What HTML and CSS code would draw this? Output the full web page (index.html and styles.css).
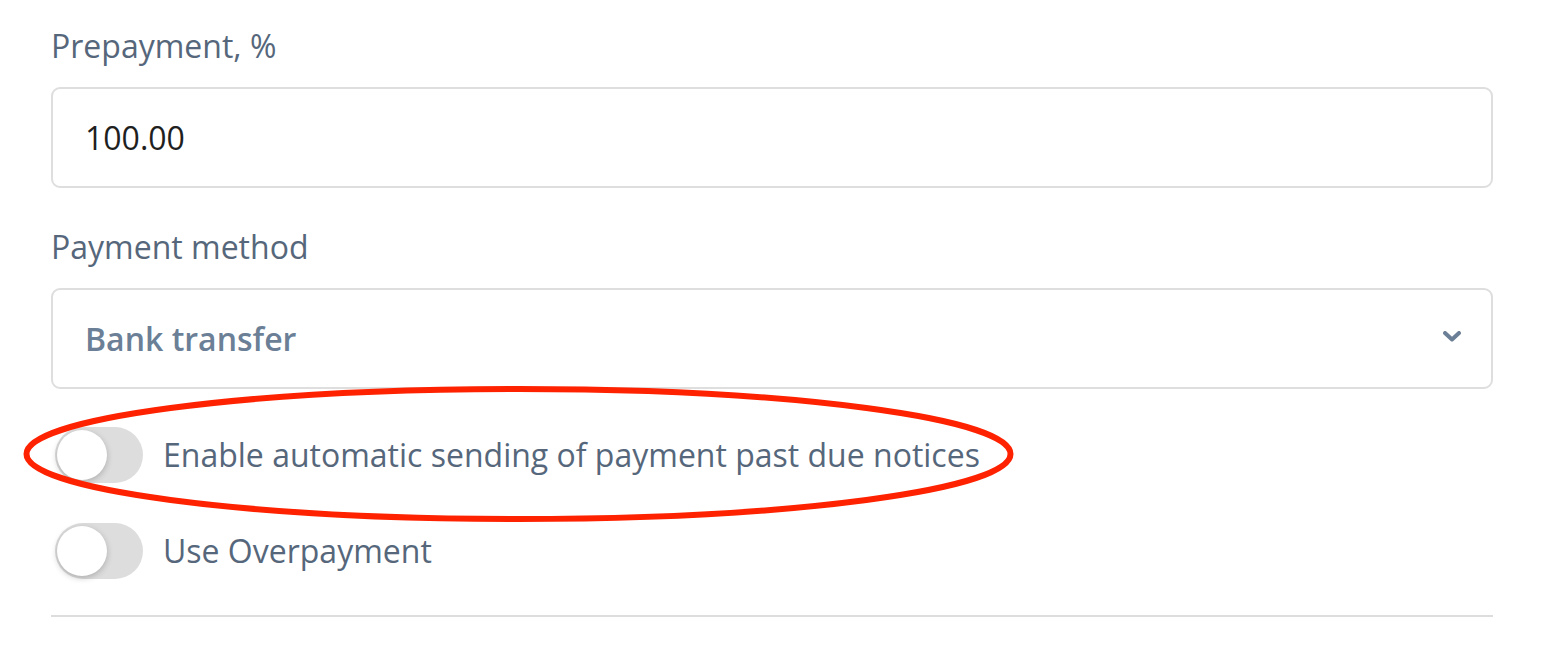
FILE: index.html
```html
<!DOCTYPE html>
<html>
<head>
<meta charset="utf-8">
<link rel="stylesheet" href="styles.css">
</head>
<body>
<div class="form">
  <div class="field">
    <label class="label">Prepayment, %</label>
    <div class="input">100.00</div>
  </div>
  <div class="field">
    <label class="label">Payment method</label>
    <div class="select">
      <span class="select-value">Bank transfer</span>
      <svg class="chevron" width="18" height="11" viewBox="0 0 18 11"><path d="M2 2 L9 8.5 L16 2" fill="none" stroke="#6b7f96" stroke-width="4" stroke-linecap="round" stroke-linejoin="round"/></svg>
    </div>
  </div>
  <div class="toggle-row first">
    <span class="toggle"><span class="knob"></span></span>
    <span class="toggle-text">Enable automatic sending of payment past due notices</span>
  </div>
  <div class="toggle-row">
    <span class="toggle"><span class="knob"></span></span>
    <span class="toggle-text">Use Overpayment</span>
  </div>
  <hr class="divider">
</div>
<svg class="annotation" width="1546" height="648" viewBox="0 0 1546 648">
  <ellipse cx="518.5" cy="454" rx="492" ry="65" fill="none" stroke="#ff2200" stroke-width="6"/>
</svg>
</body>
</html>
```
FILE: styles.css
```css
html, body {
  margin: 0;
  padding: 0;
  background: #ffffff;
}
body {
  font-family: "Open Sans", "Noto Sans", sans-serif;
  position: relative;
  width: 1546px;
  height: 648px;
  overflow: hidden;
}
.form {
  padding: 24px 53px 0 51px;
}
.field {
  display: flex;
  flex-direction: column;
  margin-bottom: 37px;
}
.field + .field {
  margin-bottom: 0;
}
.label {
  font-size: 32px;
  line-height: 44px;
  color: #56677b;
  margin-bottom: 19px;
}
.input, .select {
  box-sizing: border-box;
  height: 101px;
  border: 2px solid #dedede;
  border-radius: 9px;
  display: flex;
  align-items: center;
  padding: 0 32px;
  font-size: 32px;
}
.input {
  color: #1f1f1f;
}
.select {
  justify-content: space-between;
  padding-right: 30px;
}
.select-value {
  font-weight: 600;
  color: #6b7f96;
}
.chevron {
  display: block;
  margin-top: -4px;
}
.toggle-row {
  display: flex;
  align-items: center;
  gap: 20px;
  padding-left: 4px;
  height: 56px;
}
.toggle-row.first {
  margin-top: 38px;
}
.toggle-row + .toggle-row {
  margin-top: 40px;
}
.toggle {
  position: relative;
  width: 88px;
  height: 56px;
  border-radius: 28px;
  background: #dddddd;
  flex: none;
}
.knob {
  position: absolute;
  left: 2px;
  top: 3px;
  width: 50px;
  height: 50px;
  border-radius: 50%;
  background: #ffffff;
  box-shadow: 0 2px 6px rgba(0,0,0,0.22);
}
.toggle-text {
  font-size: 32px;
  color: #56677b;
  line-height: 44px;
}
.divider {
  border: 0;
  height: 2px;
  background: #dddddd;
  margin: 36px 0 0 0;
}
.annotation {
  position: absolute;
  left: 0;
  top: 0;
  pointer-events: none;
}
```
